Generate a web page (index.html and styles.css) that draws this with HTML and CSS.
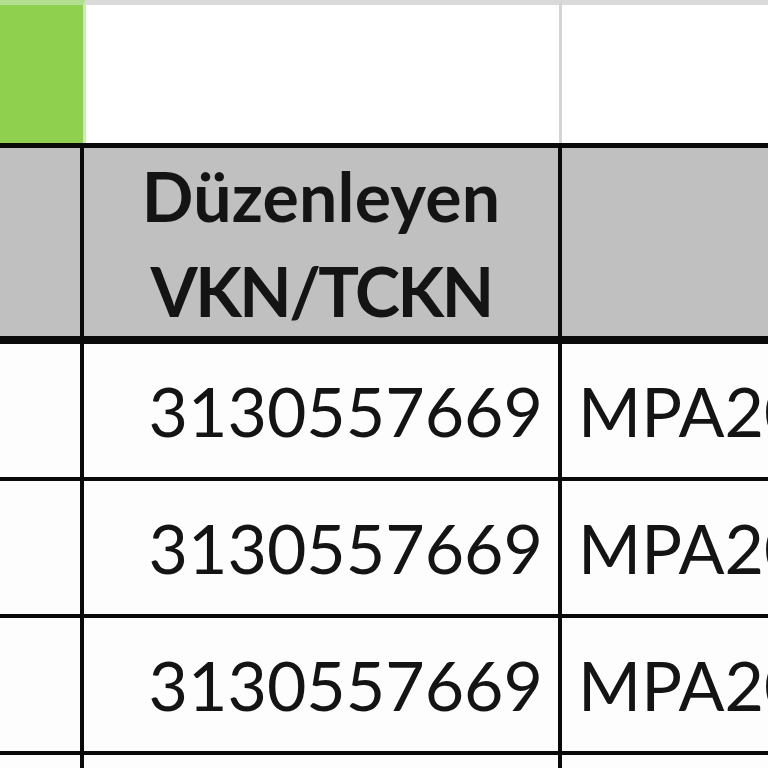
FILE: index.html
```html
<!DOCTYPE html>
<html lang="tr">
<head>
<meta charset="utf-8">
<title>Sheet</title>
<link rel="stylesheet" href="styles.css">
</head>
<body>
<div class="sheet">
  <div class="top-row">
    <div class="cell-green"></div>
    <div class="cell-white cell-white-b"></div>
    <div class="cell-white"></div>
  </div>
  <div class="grid">
    <div class="head"></div>
    <div class="head head-title">Düzenleyen<br><span class="caps">VKN/TCKN</span></div>
    <div class="head"></div>

    <div class="data"></div>
    <div class="data num">3130557669</div>
    <div class="data txt">MPA2023000000001</div>

    <div class="data"></div>
    <div class="data num">3130557669</div>
    <div class="data txt">MPA2023000000002</div>

    <div class="data"></div>
    <div class="data num">3130557669</div>
    <div class="data txt">MPA2023000000003</div>

    <div class="data"></div>
    <div class="data"></div>
    <div class="data"></div>
  </div>
</div>
</body>
</html>
```
FILE: styles.css
```css
html, body {
  margin: 0;
  padding: 0;
  background: #ffffff;
  overflow: hidden;
}

.sheet {
  width: 768px;
  height: 768px;
  overflow: hidden;
  font-family: Lato, "Open Sans", sans-serif;
  color: #141414;
}

.top-row {
  display: flex;
  box-sizing: border-box;
  border-bottom: 5px solid #0a0a0a;
  height: 148px;
}

.cell-green {
  width: 83px;
  flex: none;
  background: #8fd04f;
  border-top: 5px solid #b5df90;
  border-right: 3px solid #c9efa8;
}

.cell-white {
  flex: 1;
  background: #ffffff;
  border-top: 5px solid #dadada;
}

.cell-white-b {
  flex: none;
  width: 473px;
  border-right: 3px solid #d4d4d4;
}

.grid {
  display: grid;
  grid-template-columns: 80px 474px 1fr;
  grid-template-rows: 192px 133px 133px 133px 133px;
  column-gap: 4px;
  row-gap: 4px;
  background: #0a0a0a;
}

.head {
  background: #c0c0c0;
  margin-bottom: 4px;
}

.head-title {
  font-weight: 700;
  font-size: 68px;
  line-height: 95px;
  text-align: center;
  padding-top: 0;
  letter-spacing: 0.2px;
}

.caps {
  letter-spacing: -2.5px;
}

.data {
  background: #fdfdfd;
  font-size: 68px;
  line-height: 80px;
  padding-top: 27px;
  box-sizing: border-box;
  white-space: nowrap;
  overflow: hidden;
}

.num {
  text-align: right;
  padding-right: 15px;
}

.txt {
  padding-left: 16px;
}
```
